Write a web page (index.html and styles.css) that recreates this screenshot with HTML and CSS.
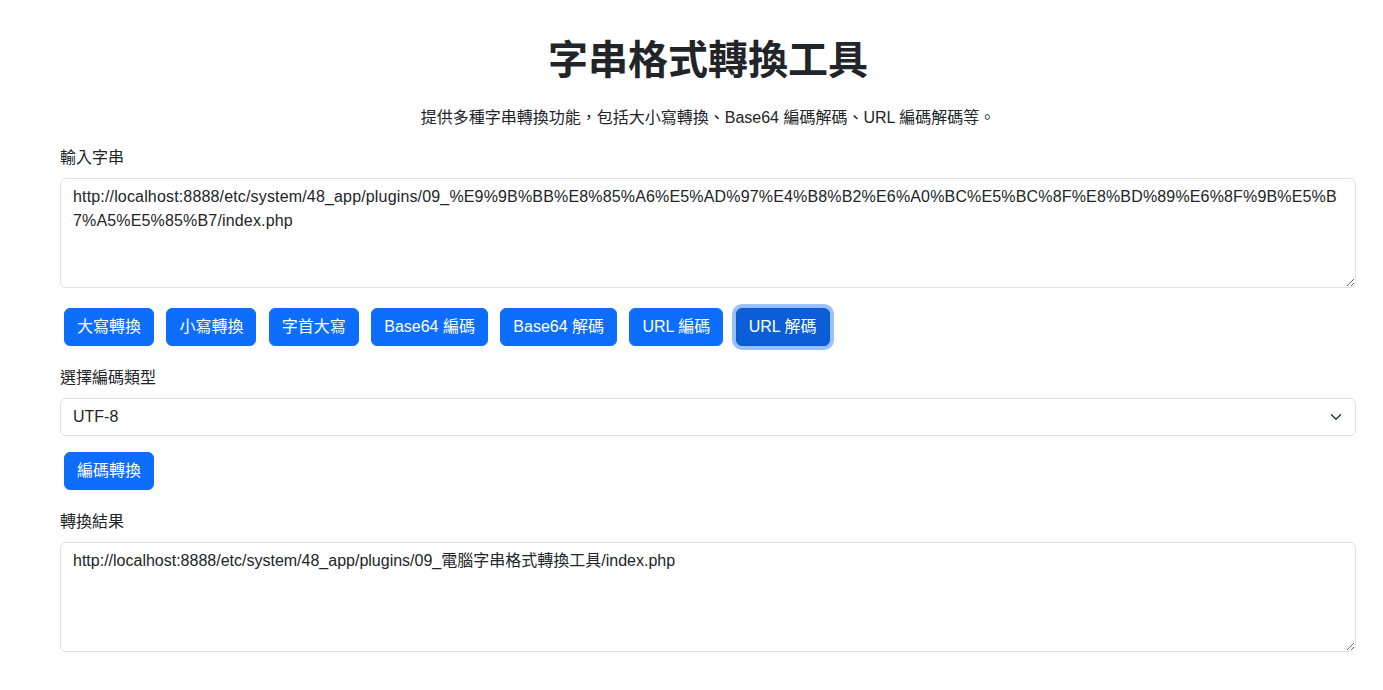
FILE: index.html
```html
<!DOCTYPE html>
<html lang="zh-Hant">
<head>
<meta charset="utf-8">
<title>字串格式轉換工具</title>
<link rel="stylesheet" href="styles.css">
</head>
<body>
<div class="container">
  <h1 class="title">字串格式轉換工具</h1>
  <p class="lead">提供多種字串轉換功能，包括大小寫轉換、Base64 編碼解碼、URL 編碼解碼等。</p>

  <div class="field">
    <label class="form-label" for="input">輸入字串</label>
    <textarea id="input" class="form-control wide" rows="4">http://localhost:8888/etc/system/48_app/plugins/09_%E9%9B%BB%E8%85%A6%E5%AD%97%E4%B8%B2%E6%A0%BC%E5%BC%8F%E8%BD%89%E6%8F%9B%E5%B7%A5%E5%85%B7/index.php</textarea>
  </div>

  <div class="btn-row">
    <button class="btn">大寫轉換</button>
    <button class="btn">小寫轉換</button>
    <button class="btn">字首大寫</button>
    <button class="btn">Base64 編碼</button>
    <button class="btn">Base64 解碼</button>
    <button class="btn">URL 編碼</button>
    <button class="btn btn-active">URL 解碼</button>
  </div>

  <div class="field">
    <label class="form-label" for="enc">選擇編碼類型</label>
    <div class="select-wrap">
      <select id="enc" class="form-select">
        <option>UTF-8</option>
        <option>Big5</option>
        <option>GBK</option>
      </select>
      <svg class="chev" width="16" height="12" viewBox="0 0 16 16"><path d="M2 5l6 6 6-6" fill="none" stroke="#343a40" stroke-width="2" stroke-linecap="round" stroke-linejoin="round"/></svg>
    </div>
  </div>

  <div class="btn-row single">
    <button class="btn">編碼轉換</button>
  </div>

  <div class="field">
    <label class="form-label" for="output">轉換結果</label>
    <textarea id="output" class="form-control" rows="4">http://localhost:8888/etc/system/48_app/plugins/09_電腦字串格式轉換工具/index.php</textarea>
  </div>
</div>
</body>
</html>
```

FILE: styles.css
```css
* { box-sizing: border-box; }

html, body {
  margin: 0;
  padding: 0;
  background: #fff;
}

body {
  font-family: "Liberation Sans", "Noto Sans CJK TC", sans-serif;
  font-size: 16px;
  line-height: 1.5;
  color: #212529;
}

.container {
  padding: 36px 27px 0 60px;
}

.title {
  margin: 0 0 22px;
  text-align: center;
  font-size: 40px;
  line-height: 1.2;
  font-weight: 700;
}

.lead {
  margin: 0 0 16px;
  text-align: center;
  font-size: 16px;
}

.field {
  margin-bottom: 16px;
}

.form-label {
  display: block;
  margin-bottom: 8px;
}

.form-control {
  display: block;
  width: 100%;
  height: 110px;
  padding: 6px 12px;
  font: inherit;
  font-size: 16px;
  line-height: 1.5;
  color: #212529;
  background: #fff;
  border: 1px solid #dee2e6;
  border-radius: 6px;
  resize: vertical;
  overflow: auto;
  word-break: break-all;
}

.form-control.wide {
  letter-spacing: 0.16px;
}

.btn-row {
  margin-bottom: 16px;
  font-size: 0;
}

.btn-row.single {
  margin-top: -4px;
}

.btn {
  display: inline-block;
  margin: 4px 8.4px 4px 4px;
  padding: 6px 12px;
  height: 38px;
  font-family: inherit;
  font-size: 16px;
  line-height: 24px;
  color: #fff;
  background: #0d6efd;
  border: 1px solid #0d6efd;
  border-radius: 6px;
  cursor: pointer;
}

.btn-active {
  background: #0b5ed7;
  border-color: #0a58ca;
  box-shadow: 0 0 0 4px rgba(49, 132, 253, 0.5);
}

.select-wrap {
  position: relative;
}

.form-select {
  display: block;
  width: 100%;
  height: 38px;
  padding: 6px 36px 6px 12px;
  font: inherit;
  font-size: 16px;
  line-height: 1.5;
  color: #212529;
  background: #fff;
  border: 1px solid #dee2e6;
  border-radius: 6px;
  appearance: none;
  -webkit-appearance: none;
}

.chev {
  position: absolute;
  right: 12px;
  top: 13px;
  pointer-events: none;
}
```
